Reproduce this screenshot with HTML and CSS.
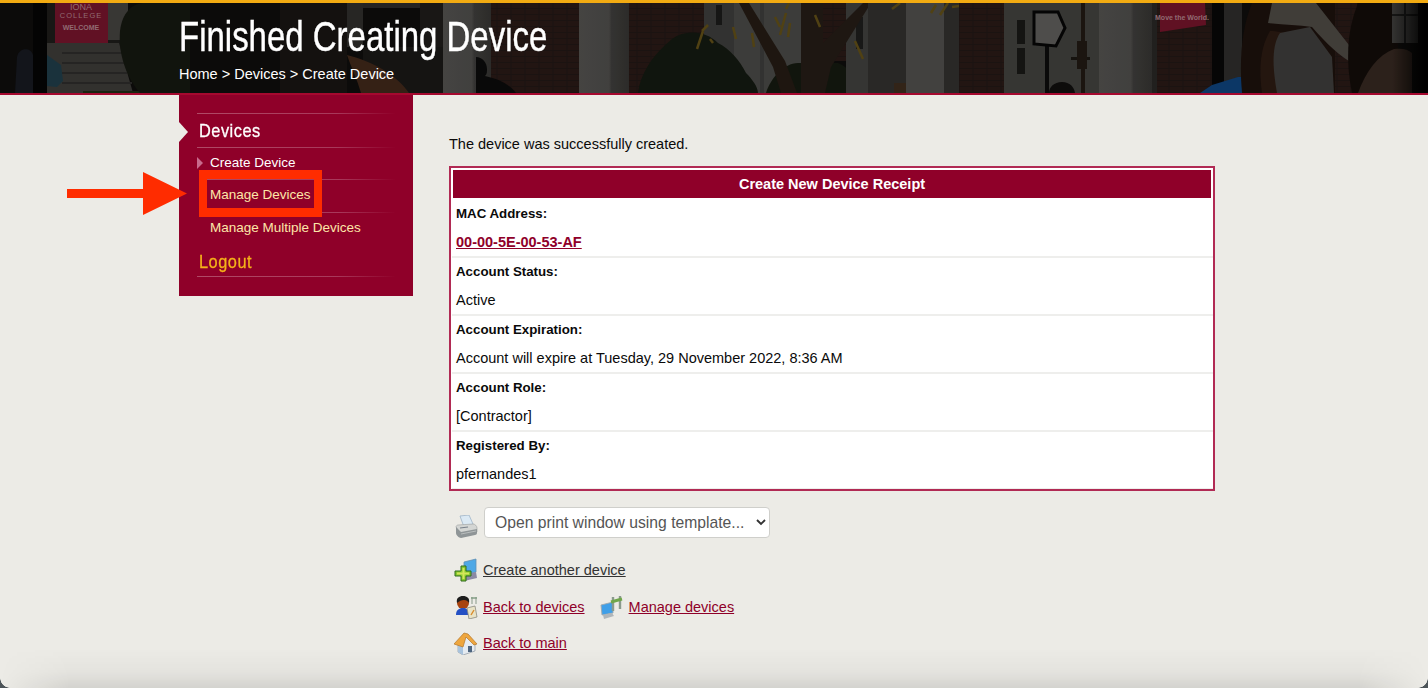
FILE: index.html
```html
<!DOCTYPE html>
<html lang="en">
<head>
<meta charset="utf-8">
<title>Finished Creating Device</title>
<link rel="stylesheet" href="styles.css">
</head>
<body>
<header class="hero">
  <svg class="hero-photo" viewBox="0 0 1428 90" aria-hidden="true">
    <defs>
      <pattern id="brick" width="14" height="6" patternUnits="userSpaceOnUse">
        <rect width="14" height="6" fill="#271815"/>
        <path d="M0 5.500h14M7 0v5.500" stroke="#1f1614" stroke-width="1"/>
      </pattern>
      <linearGradient id="fadeR" x1="0" x2="1" y1="0" y2="0">
        <stop offset="0" stop-color="#000" stop-opacity="0"/>
        <stop offset="1" stop-color="#000"/>
      </linearGradient>
      <linearGradient id="col" x1="0" x2="1" y1="0" y2="0">
        <stop offset="0" stop-color="#4f4e4b"/>
        <stop offset=".6" stop-color="#4a4947"/>
        <stop offset=".65" stop-color="#3c3b39"/>
        <stop offset="1" stop-color="#33322f"/>
      </linearGradient>
    </defs>
    <rect width="1428" height="90" fill="#0e0d0c"/>

    <!-- left: banner, steps, shrub -->
    <rect x="47" width="80" height="90" fill="#1c1b19"/>
    <rect x="108" width="20" height="37" fill="#403f3c"/>
    <path d="M47 40h72l14 50H47z" fill="#393835"/>
    <path d="M62 50h62M62 60h66M62 70h68M62 80h70" stroke="#2b2a28" stroke-width="2"/>
    <path d="M83 88h60v2H83z" fill="#1c2a12"/>
    <rect x="55" width="53" height="40" fill="#6f1429"/>
    <text class="banner-top" x="81" y="7">IONA</text>
    <text class="banner-mid" x="81" y="15">COLLEGE</text>
    <text class="banner-low" x="81" y="27">WELCOME</text>
    <rect x="33" width="14" height="90" fill="#050505"/>
    <path d="M15 90l2-36c2-10 14-10 16-2v38z" fill="#16181f"/>
    <path d="M47 52l14 10 2 16-6 6-10-1z" fill="#1e3a45"/>
    <path d="M120 28C122 10 132 0 145 0h45v90h-50c-14-16-22-40-20-62z" fill="#14170f"/>
    <rect x="280" width="67" height="90" fill="#171412"/>
    <rect x="347" width="16" height="44" fill="#2d2c2a"/>
    <rect x="363" width="57" height="5" fill="#2b2a28"/>
    <rect x="420" width="23" height="90" fill="#1d1b19"/>
    <rect x="363" y="44" width="80" height="46" fill="#191715"/>
    <path d="M347 52c24 6 48 18 62 38h-48c-4-14-10-26-14-38z" fill="#3d2619"/>

    <!-- columns and brick -->
    <rect x="443" width="48" height="90" fill="url(#col)"/>
    <rect x="491" width="88" height="90" fill="url(#brick)"/>
    <path d="M476 54c6 0 11 5 11 12 0 3 0 5-2 7 14 3 24 8 31 17h-40z" fill="#0b0b0b"/>
    <rect x="579" width="50" height="90" fill="url(#col)"/>
    <rect x="629" width="75" height="90" fill="url(#brick)"/>
    <rect x="704" width="30" height="90" fill="#3a3a38"/>
    <rect x="716" y="2" width="6" height="20" fill="#1a1a19"/>

    <!-- tree and shrubs -->
    <rect x="734" width="70" height="90" fill="#454542"/>
    <rect x="760" width="4" height="90" fill="#3a3a38"/>
    <path d="M638 90c2-18 14-38 34-54 14-10 34-8 46 4 12 6 22 18 28 30 6 6 12 14 12 20z" fill="#131810"/>
    <path d="M766 90c4-14 18-30 32-30h40c10 4 22 16 26 30z" fill="#14190f"/>
    <rect x="819" width="27" height="58" fill="url(#brick)"/>
    <rect x="846" width="22" height="90" fill="#3d3d3b"/>
    <rect x="856" y="14" width="7" height="32" fill="#1c1c1b"/>
    <path d="M739 0h10l36 58 12 32h-16l-8-26z" fill="#231a13"/>
    <path d="M801 0h22v40l40-40h8l-40 64-6 26h-24z" fill="#231b15"/>
    <rect x="868" width="38" height="90" fill="#2f2e2c"/>
    <rect x="894" y="80" width="12" height="10" fill="#3a2a1c"/>
    <rect x="906" width="38" height="90" fill="#4c4b48"/>
    <rect x="944" width="15" height="90" fill="#2f2e2c"/>
    <g class="leaves">
      <path d="M703 28l-6 18M708 22l-6 6M710 36l3 4M733 24l3 12M752 30l2 14M775 14l5 10M786 10l-6 22M789 0l-3 6M790 20l-2 14M815 12l5 12M855 38l8 18M900 0l-8 6M936 2l-5 8M948 0l-8 12"/>
      <path d="M952 4l14-2-6 12M975 2l10 4-10 14M1000 2l14 6-14 10M1020 2l8 10M1050 0l10 8"/>
    </g>

    <!-- right: door, sign, banner, people -->
    <rect x="959" width="45" height="90" fill="url(#brick)"/>
    <rect x="1004" width="95" height="90" fill="#3e3e3b"/>
    <rect x="1017" y="17" width="8" height="24" fill="#171715"/>
    <rect x="1017" y="45" width="8" height="26" fill="#171715"/>
    <rect x="1045" y="42" width="4" height="48" fill="#0c0c0c"/>
    <path d="M1034 9h24l7 16-9 18-22-2z" fill="#595856" stroke="#060606" stroke-width="3"/>
    <rect x="1081" width="4" height="90" fill="#1f1913"/>
    <rect x="1071" y="54" width="19" height="3" fill="#1a1612"/>
    <rect x="1077" y="38" width="10" height="28" fill="#1f1913"/>
    <path d="M1049 90c0-6 5-11 13-11s12 5 13 11z" fill="#0f0e0d"/>
    <rect x="1099" width="53" height="90" fill="url(#col)"/>
    <rect x="1152" width="5" height="90" fill="#262523"/>
    <rect x="1157" width="55" height="90" fill="url(#brick)"/>
    <path d="M1160 0h45l1 22-46 7z" fill="#6e1428"/>
    <text class="banner-low" x="1182" y="17">Move the World.</text>
    <rect x="1212" width="12" height="90" fill="#070707"/>
    <rect x="1224" width="18" height="90" fill="#2c2b29"/>
    <path d="M1200 90l12-8 26-8h6v16z" fill="#0e3f75"/>
    <path d="M1242 90c-3-34 0-66 10-90h110l-20 90z" fill="#1b100c"/>
    <rect x="1335" width="22" height="90" fill="url(#brick)"/>
    <path d="M1262 90c-4-30 0-48 8-62 8 0 18 2 26 8l-6 54z" fill="#2a1a12"/>
    <path d="M1277 90c-5-28-5-48 3-60l30-6 22 30 2 36z" fill="#3b3a38"/>
    <path d="M1268 20L1272 0h44l44 56-4 6c-16-8-30-22-44-38-14-2-28-2-44-4z" fill="#494640"/>
    <path d="M1352 90c-6-30-6-60 6-90h40v90z" fill="#120c09"/>
    <rect x="1392" width="26" height="40" fill="#3c3b39"/>
    <path d="M1392 12h26M1405 0v40" stroke="#1a1a19" stroke-width="2"/>
    <path d="M1358 90c8-22 20-38 36-44 8-1 14 0 18 4v40z" fill="#33261f"/>
    <rect x="1392" width="36" height="90" fill="url(#fadeR)"/>
    <rect class="hero-dim" width="1428" height="90"/>
  </svg>
  <div class="hero-text">
    <h1 class="hero-title"><span class="squeeze-title">Finished Creating Device</span></h1>
    <p class="crumbs">Home &gt; Devices &gt; Create Device</p>
  </div>
</header>

<div class="page">
  <nav class="side">
    <div class="side-head current"><span class="squeeze">Devices</span></div>
    <ul class="side-list">
      <li class="side-item active">Create Device</li>
      <li class="side-item middle">Manage Devices</li>
      <li class="side-item">Manage Multiple Devices</li>
    </ul>
    <div class="side-head logout"><span class="squeeze">Logout</span></div>
  </nav>

  <main class="content">
    <p class="notice">The device was successfully created.</p>
    <section class="receipt">
      <h2 class="receipt-title">Create New Device Receipt</h2>
      <div class="row"><div class="label">MAC Address:</div><div class="value"><a class="mac" href="#">00-00-5E-00-53-AF</a></div></div>
      <div class="row"><div class="label">Account Status:</div><div class="value">Active</div></div>
      <div class="row"><div class="label">Account Expiration:</div><div class="value">Account will expire at Tuesday, 29 November 2022, 8:36 AM</div></div>
      <div class="row"><div class="label">Account Role:</div><div class="value">[Contractor]</div></div>
      <div class="row"><div class="label">Registered By:</div><div class="value">pfernandes1</div></div>
    </section>

    <div class="print-row">
      <svg class="icon print-icon" viewBox="0 0 24 24" aria-hidden="true">
        <path d="M6 1l9-1 4 9-9 3z" fill="#dbe9f4" stroke="#9fb4c6" stroke-width=".8"/>
        <path d="M2 12c0-1 1-2 2-2l15-1c2 0 4 2 4 4v4L7 20z" fill="#d4d6d4" stroke="#9a9e9e" stroke-width=".6"/>
        <path d="M2 12l5 5 16-3v4c0 1-1 2-2 2L7 23c-2 0-5-3-5-5z" fill="#8f9597"/>
        <path d="M7 19l15-3" stroke="#b9bdbd" stroke-width="1"/>
        <path d="M6 13l8-1" stroke="#77808a" stroke-width="1.2"/>
      </svg>
      <div class="select-wrap">
        <select class="print-select"><option>Open print window using template...</option></select>
        <svg class="chev" viewBox="0 0 10 7" aria-hidden="true"><path d="M1 1l4 4 4-4" fill="none" stroke="#333" stroke-width="1.9"/></svg>
      </div>
    </div>

    <div class="action first">
      <svg class="icon" viewBox="0 0 24 24" aria-hidden="true">
        <path d="M10 4l12-3v13l-12 3z" fill="#4ea8e6" stroke="#5f8fb4" stroke-width=".8"/>
        <path d="M12 16l10-2 1 6-13 3z" fill="#8c8aa4"/>
        <path d="M7 8h5v5h5v5h-5v5H7v-5H1v-5h6z" fill="#86c92e" stroke="#2f6a1c" stroke-width="1"/>
        <path d="M8.500 10h2v4.500h4.500v2h-4.500v4.500h-2v-4.500H3v-2h5.500z" fill="#d4e65a"/>
      </svg>
      <a class="link dark" href="#">Create another device</a>
    </div>
    <div class="action">
      <svg class="icon" viewBox="0 0 24 24" aria-hidden="true">
        <path d="M18 2v7M22 2v7" stroke="#9aa89a" stroke-width="1.2"/>
        <path d="M17 3h6" stroke="#7f9a80" stroke-width="1.4"/>
        <circle cx="9" cy="8" r="6" fill="#a8430f"/>
        <path d="M3 8C2 3 5 1 9 1s7 2 6 7c-1-2-3-3-5-3S5 6 3 8z" fill="#1d1d1d"/>
        <path d="M2 20c0-5 3-7 7-7s6 2 6 7z" fill="#2450c4"/>
        <path d="M13 13l8-2 2 11-8 2z" fill="#e9e3c6" stroke="#8a8a80" stroke-width=".8"/>
        <path d="M20 15l-3 5" stroke="#d98a2a" stroke-width="1.4"/>
      </svg>
      <a class="link" href="#">Back to devices</a>
      <svg class="icon second-icon" viewBox="0 0 24 24" aria-hidden="true">
        <path d="M1 10l12-3v11l-11 2z" fill="#3f9fe8" stroke="#9fa8ae" stroke-width=".9"/>
        <path d="M3 20l9-2 2 3-10 3z" fill="#b0b6ba"/>
        <path d="M13 16V2M20 14V1" stroke="#8a9a8c" stroke-width="2.4"/>
        <path d="M11 7l11-3" stroke="#6fa64a" stroke-width="3"/>
      </svg>
      <a class="link" href="#">Manage devices</a>
    </div>
    <div class="action">
      <svg class="icon" viewBox="0 0 24 24" aria-hidden="true">
        <path d="M4 13l9-8 8 8v7L9 24l-5-3z" fill="#e6ecf2" stroke="#8f9aa4" stroke-width=".7"/>
        <path d="M9 16v8l-5-3v-8z" fill="#a9c4de"/>
        <path d="M0 13L10 2l4 1 9 10-3 1-8-8-3 10z" fill="#eea63e" stroke="#b3752a" stroke-width=".7"/>
        <rect x="14" y="15" width="4" height="6" fill="#4d6580"/>
      </svg>
      <a class="link" href="#">Back to main</a>
    </div>
  </main>
</div>

<div class="callout" aria-hidden="true">
  <div class="callout-box"></div>
  <svg class="callout-arrow" viewBox="0 0 120 43"><path d="M0 17h76V0l44 21.500-44 21.500V26H0z" fill="#ff2c00"/></svg>
</div>
<div class="window-edge" aria-hidden="true"></div>
<div class="corner corner-left" aria-hidden="true"></div>
<div class="corner corner-right" aria-hidden="true"></div>
</body>
</html>
```

FILE: styles.css
```css
* { box-sizing: border-box; }
html, body { margin: 0; height: 100%; }
body {
  position: relative;
  width: 1428px;
  height: 688px;
  overflow: hidden;
  background: #ecebe6;
  font-family: "Liberation Sans", Arial, sans-serif;
  font-size: 14.5px;
  color: #0a0a0a;
}

.hero {
  position: relative;
  height: 95px;
  border-top: 3px solid #f2ab12;
  border-bottom: 2px solid #a5092f;
  background: #1d1b19;
  padding-left: 179px;
  overflow: hidden;
}
.hero-photo { position: absolute; left: 0; top: 0; width: 1428px; height: 90px; }
.hero-dim { fill: #000; opacity: .12; }
.banner-top, .banner-mid, .banner-low {
  font-family: "Liberation Sans", Arial, sans-serif;
  text-anchor: middle;
  fill: #a57a82;
}
.banner-top { font-size: 9px; }
.banner-mid { font-size: 7.5px; letter-spacing: 1px; }
.banner-low { font-size: 7px; font-weight: 700; }
.leaves { fill: none; stroke: #5c4a16; stroke-width: 2.5; }
.hero-text { position: relative; }
.hero-title {
  margin: 12px 0 0;
  font-weight: 400;
  font-size: 42px;
  line-height: 44px;
  color: #fff;
  white-space: nowrap;
}
.squeeze-title {
  display: inline-block;
  transform: scaleX(.785);
  transform-origin: left center;
  -webkit-text-stroke: .4px #fff;
}
.crumbs { margin: 6px 0 0; line-height: 18px; color: #fff; }

.page { display: flex; align-items: flex-start; padding-left: 179px; }

.side {
  position: relative;
  width: 234px;
  height: 201px;
  padding: 18px 18px 0;
  background: #8f0029;
}
.side-head {
  height: 34px;
  padding-left: 2px;
  font-size: 19px;
  line-height: 34px;
  letter-spacing: .6px;
  border-top: 1px solid transparent;
  border-image: linear-gradient(90deg, #b04a66, #a8385a 70%, #8f0029) 1;
}
.squeeze {
  display: inline-block;
  transform: scaleX(.86);
  transform-origin: left center;
  -webkit-text-stroke: .3px currentColor;
}
.current { color: #fff; }
.current::before {
  content: "";
  position: absolute;
  left: 0;
  top: 27px;
  border-left: 9px solid #ecebe6;
  border-top: 10px solid transparent;
  border-bottom: 10px solid transparent;
}
.logout {
  height: 33px;
  line-height: 36px;
  color: #f5b21a;
  border-top: 0;
  border-bottom: 1px solid transparent;
}
.side-list { list-style: none; margin: 0; padding: 0; }
.side-item {
  position: relative;
  height: 32px;
  padding-left: 13px;
  font-size: 13.5px;
  line-height: 30px;
  color: #fde6a8;
  border-top: 1px solid transparent;
  border-image: linear-gradient(90deg, #b04a66, #a8385a 70%, #8f0029) 1;
}
.side-item.active { color: #fff; }
.side-item.middle { height: 33px; }
.side-item.active::before {
  content: "";
  position: absolute;
  left: 0;
  top: 9px;
  border-left: 6px solid #c86a8c;
  border-top: 6px solid transparent;
  border-bottom: 6px solid transparent;
}
.side-item + .side-item { margin-left: 9px; padding-left: 4px; }

.content { width: 766px; margin-left: 36px; padding-top: 39px; }
.notice { margin: 0 0 12px; line-height: 20px; }

.receipt {
  height: 325px;
  padding: 2px 0 0 1px;
  background: #fff;
  border: 2px solid #b12a54;
  overflow: hidden;
}
.receipt-title {
  margin: 0 2px 2px 1px;
  height: 28px;
  background: #8f0029;
  color: #fff;
  font-size: 14.5px;
  line-height: 28px;
  text-align: center;
}
.row { height: 58px; padding-left: 4px; border-bottom: 2px solid #eeeeec; }
.label, .value { height: 29px; line-height: 29px; position: relative; top: -1px; }
.label { font-weight: 700; font-size: 13.3px; }
.mac { color: #8f0029; font-weight: 700; }

.print-row { display: flex; align-items: flex-start; gap: 6px; height: 31px; margin-top: 16px; padding-left: 5px; }
.print-icon { margin-top: 8px; }
.select-wrap { position: relative; width: 286px; height: 31px; }
.print-select {
  appearance: none;
  width: 100%;
  height: 100%;
  padding: 0 10px;
  background: #fff;
  border: 1px solid #cfcfcb;
  border-radius: 4px;
  font-family: "Liberation Sans", Arial, sans-serif;
  font-size: 15.7px;
  color: #555;
}
.chev { position: absolute; right: 4px; top: 12px; width: 10px; height: 7px; }

.icon { display: block; flex: none; width: 24px; height: 24px; }
.action { display: flex; align-items: center; gap: 5px; height: 24px; margin-top: 12.5px; padding-left: 5px; }
.action.first { margin-top: 20px; }
.second-icon { margin-left: 10px; }
.link { color: #8f0029; }
.link.dark { color: #333; }

.callout { position: absolute; left: 0; top: 0; }
.callout-box {
  position: absolute;
  left: 199px;
  top: 170px;
  width: 123px;
  height: 47px;
  border: solid #ff2c00;
  border-width: 9px 8px;
}
.callout-arrow { position: absolute; left: 67px; top: 172px; width: 120px; height: 43px; }

.window-edge {
  position: absolute;
  left: 0;
  right: 0;
  bottom: 0;
  height: 40px;
  background: linear-gradient(180deg, rgba(0,0,0,0), rgba(0,0,0,.03) 60%, rgba(0,0,0,.1));
  -webkit-mask-image: linear-gradient(90deg, transparent 0, #000 70px, #000 calc(100% - 70px), transparent 100%);
}
.corner { position: absolute; bottom: 0; width: 10px; height: 10px; }
.corner-left { left: 0; background: radial-gradient(circle at 100% 0, transparent 9.500px, #4c5458 10px); }
.corner-right { right: 0; background: radial-gradient(circle at 0 0, transparent 9.500px, #4c5458 10px); }
```
